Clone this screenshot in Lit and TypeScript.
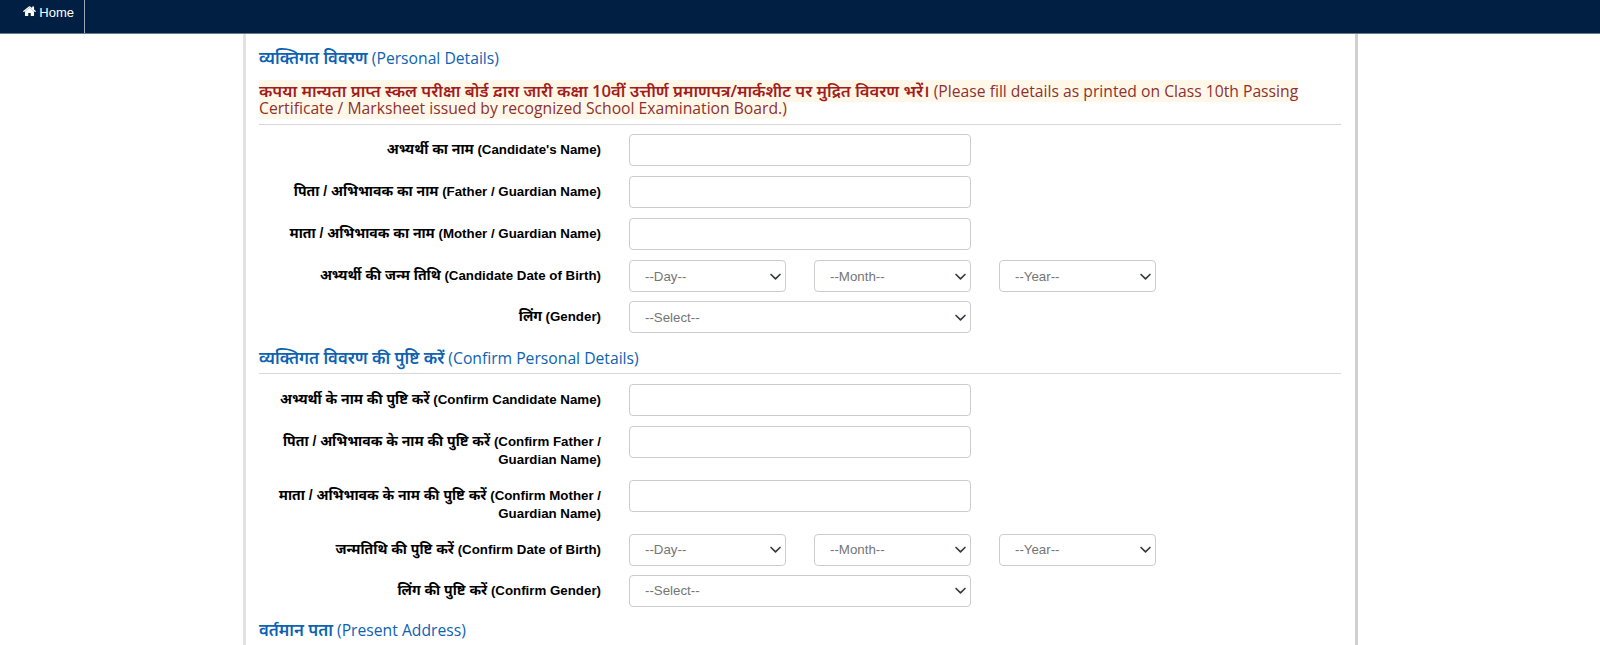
import { LitElement, html, css, svg } from "lit";
import { customElement } from "lit/decorators.js";

const home = svg`<svg class="home" viewBox="0 0 24 20" width="13" height="11"><path fill="#fff" d="M12 3.2 3.6 10.1v7.4c0 .5.4.9.9.9h5.2v-5.6h4.6v5.6h5.2c.5 0 .9-.4.9-.9v-7.4L12 3.2zM23.7 9.2 20.4 6.5V1.2c0-.3-.2-.5-.4-.5h-2.6c-.3 0-.5.2-.5.5v2.5L13.2.7c-.7-.6-1.7-.6-2.4 0L.3 9.2c-.2.2-.2.5 0 .7l.9 1c.2.2.5.2.7.1L12 2.7l10.1 8.3c.2.1.5.1.7-.1l.9-1c.2-.2.2-.5 0-.7z"/></svg>`;

const chevron = svg`<svg class="chev" viewBox="0 0 16 16" width="13" height="13"><path fill="none" stroke="#343a40" stroke-width="2" stroke-linecap="round" stroke-linejoin="round" d="m2.5 5.5 5.5 5.5 5.5-5.5"/></svg>`;

@customElement("app-root")
export class AppRoot extends LitElement {
  static styles = css`
    :host { display: block; width: 1600px; height: 645px; overflow: hidden; background: #fff; font-family: "Liberation Sans", Arial, "Noto Sans", sans-serif; }
    .nav { height: 34px; box-sizing: border-box; background: #001f43; border-bottom: 1px solid #6c7a8c; display: flex; }
    .home-link { width: 85px; box-sizing: border-box; height: 33px; border-right: 1px solid #9aa6b4; color: #fff; font-size: 13px; display: flex; justify-content: flex-end; align-items: flex-start; gap: 3px; padding: 5px 10px 0 0; line-height: 15px; }
    .home { margin-top: 1px; }
    .wrap { width: 1115px; box-sizing: border-box; margin-left: 243px; height: 611px; border-left: 3px solid #e2e2e2; border-right: 3px solid #d0d0d0; padding: 0 14px 0 13px; overflow: hidden; }
    .h { font-family: "Open Sans", "Noto Sans", sans-serif; color: #0d62b2; font-size: 15.7px; line-height: 20px; }
    .h .hi { font-size: 16.7px; font-weight: 600; }
    .first { margin-top: 14px; }
    .second { margin-top: 5.5px; }
    .third { margin-top: 4px; }
    .notice { font-family: "Open Sans", "Noto Sans", sans-serif; margin-top: 14.25px; font-size: 15.7px; line-height: 17.2px; color: #8e3030; }
    .notice .text { background: #fff8e8; }
    .notice .hi { color: #a31c1c; font-size: 16.6px; font-weight: 600; }
    hr { margin: 0; border: 0; border-top: 1px solid #d8d8d8; }
    .nhr { margin-top: 6.6px; margin-bottom: 9px; }
    .chr { margin-top: 4.5px; margin-bottom: 10.3px; }
    .row { display: grid; grid-template-columns: 342px 341.4px; column-gap: 28.3px; align-items: start; height: 41.7px; }
    .row.tall { height: 54px; }
    .row.top { height: 42.4px; }
    .row.date { height: 41px; }
    label { text-align: right; font-size: 13.3px; font-weight: 700; color: #000; line-height: 18px; padding-top: 6px; }
    label .hi { font-size: 14px; }
    .inp { height: 32px; box-sizing: border-box; border: 1px solid #ccc; border-radius: 4px; background: #fff; }
    .sel { height: 32px; box-sizing: border-box; border: 1px solid #ccc; border-radius: 4px; background: #fff; display: flex; align-items: center; justify-content: space-between; padding: 0 3px 0 14.7px; color: #757575; font-size: 13.3px; }
    .dates { display: flex; gap: 28.6px; width: 526.9px; }
    .dates .sel { width: 156.4px; flex: none; }
  `;

  private label(hi: string, en: string) {
    return html`<label><span class="hi">${hi}</span> ${en}</label>`;
  }
  private input(hi: string, en: string, cls = "") {
    return html`<div class="row ${cls}">${this.label(hi, en)}<div class="inp"></div></div>`;
  }
  private sel(t: string) {
    return html`<div class="sel"><span>${t}</span>${chevron}</div>`;
  }
  private dates(hi: string, en: string) {
    return html`<div class="row date">${this.label(hi, en)}<div class="dates">${this.sel("--Day--")}${this.sel("--Month--")}${this.sel("--Year--")}</div></div>`;
  }
  private gender(hi: string, en: string) {
    return html`<div class="row">${this.label(hi, en)}${this.sel("--Select--")}</div>`;
  }

  render() {
    return html`
      <div class="nav"><div class="home-link">${home}<span>Home</span></div></div>
      <div class="wrap">
        <div class="h first"><span class="hi">व्यक्तिगत विवरण</span> (Personal Details)</div>
        <div class="notice"><span class="text"><span class="hi">कृपया मान्यता प्राप्त स्कूल परीक्षा बोर्ड द्वारा जारी कक्षा 10वीं उत्तीर्ण प्रमाणपत्र/मार्कशीट पर मुद्रित विवरण भरें।</span> (Please fill details as printed on Class 10th Passing Certificate / Marksheet issued by recognized School Examination Board.)</span></div>
        <hr class="nhr" />
        ${this.input("अभ्यर्थी का नाम", "(Candidate's Name)")}
        ${this.input("पिता / अभिभावक का नाम", "(Father / Guardian Name)")}
        ${this.input("माता / अभिभावक का नाम", "(Mother / Guardian Name)", "top")}
        ${this.dates("अभ्यर्थी की जन्म तिथि", "(Candidate Date of Birth)")}
        ${this.gender("लिंग", "(Gender)")}
        <div class="h second"><span class="hi">व्यक्तिगत विवरण की पुष्टि करें</span> (Confirm Personal Details)</div>
        <hr class="chr" />
        ${this.input("अभ्यर्थी के नाम की पुष्टि करें", "(Confirm Candidate Name)")}
        ${this.input("पिता / अभिभावक के नाम की पुष्टि करें", "(Confirm Father / Guardian Name)", "tall")}
        ${this.input("माता / अभिभावक के नाम की पुष्टि करें", "(Confirm Mother / Guardian Name)", "tall")}
        ${this.dates("जन्मतिथि की पुष्टि करें", "(Confirm Date of Birth)")}
        ${this.gender("लिंग की पुष्टि करें", "(Confirm Gender)")}
        <div class="h third"><span class="hi">वर्तमान पता</span> (Present Address)</div>
      </div>
    `;
  }
}
